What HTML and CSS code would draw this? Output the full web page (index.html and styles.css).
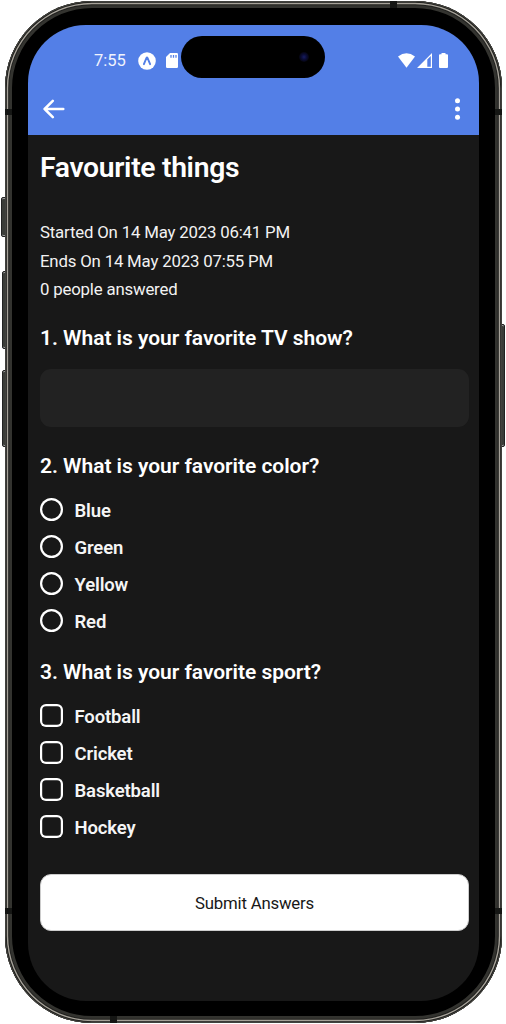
FILE: index.html
```html
<!DOCTYPE html>
<html lang="en">
<head>
<meta charset="utf-8">
<title>Favourite things</title>
<link rel="stylesheet" href="styles.css">
</head>
<body>
<div class="device">
  <i class="key key-action"></i><i class="key key-up"></i><i class="key key-down"></i><i class="key key-power"></i>
  <div class="phone">
    <i class="band band-top"></i><i class="band band-bottom"></i>
    <i class="band band-left-top"></i><i class="band band-left-bottom"></i>
    <i class="band band-right-top"></i><i class="band band-right-bottom"></i>
    <main class="screen">
      <header class="header">
        <div class="status">
          <span class="time">7:55</span>
          <svg class="expo" width="18" height="18" viewBox="0 0 18 18"><circle cx="9" cy="9" r="8.8" fill="#fff"/><path d="M5.9 12.2 8.5 5.9Q9 5 9.5 5.9L12.1 12.2" fill="none" stroke="#537fe7" stroke-width="1.9" stroke-linecap="round"/></svg>
          <svg class="sd" width="12" height="15" viewBox="0 0 12 15"><path d="M4 0H10.8Q12 0 12 1.2V13.8Q12 15 10.8 15H1.2Q0 15 0 13.8V4Z" fill="#fff"/><path d="M5 2V4.7M7.5 2V4.7M10 2V4.7" stroke="#537fe7" stroke-width="1.3"/></svg>
          <div class="indicators">
            <svg width="17" height="15" viewBox="0 0 17 15"><path d="M0 3.5Q8.5-3.2 17 3.5L8.5 14.8Z" fill="#fff"/></svg>
            <svg width="15" height="15" viewBox="0 0 15 15"><path d="M0 15 15 0V15ZM10.3 6.5V13.8H13.8V3Z" fill="#fff" fill-rule="evenodd"/></svg>
            <svg class="battery" width="9" height="15" viewBox="0 0 9 15"><path d="M2.5 0H6.5V1.3H8Q9 1.3 9 2.3V14Q9 15 8 15H1Q0 15 0 14V2.3Q0 1.3 1 1.3H2.5Z" fill="#fff"/></svg>
          </div>
        </div>
        <div class="island"><i class="camera"></i></div>
        <nav class="toolbar">
          <svg width="22" height="20" viewBox="0 0 22 20"><path d="M20.3 10H1.6M9.8 1.8 1.6 10 9.8 18.2" fill="none" stroke="#fff" stroke-width="2.5" stroke-linecap="round" stroke-linejoin="round"/></svg>
          <svg width="6" height="24" viewBox="0 0 6 24"><g fill="#fff"><circle cx="2.5" cy="3.7" r="2.5"/><circle cx="2.5" cy="12" r="2.5"/><circle cx="2.5" cy="20.2" r="2.5"/></g></svg>
        </nav>
      </header>
      <section class="content">
        <h1 class="title">Favourite things</h1>
        <div class="meta">
          <p>Started On 14 May 2023 06:41 PM</p>
          <p>Ends On 14 May 2023 07:55 PM</p>
          <p>0 people answered</p>
        </div>
        <h2 class="question">1. What is your favorite TV show?</h2>
        <div class="input"></div>
        <h2 class="question q2">2. What is your favorite color?</h2>
        <ul class="options">
          <li><i class="mark radio"></i><span>Blue</span></li>
          <li><i class="mark radio"></i><span>Green</span></li>
          <li><i class="mark radio"></i><span>Yellow</span></li>
          <li><i class="mark radio"></i><span>Red</span></li>
        </ul>
        <h2 class="question q3">3. What is your favorite sport?</h2>
        <ul class="options">
          <li><i class="mark check"></i><span>Football</span></li>
          <li><i class="mark check"></i><span>Cricket</span></li>
          <li><i class="mark check"></i><span>Basketball</span></li>
          <li><i class="mark check"></i><span>Hockey</span></li>
        </ul>
        <button class="submit">Submit Answers</button>
      </section>
    </main>
  </div>
</div>
</body>
</html>
```
FILE: styles.css
```css
* { box-sizing: border-box; }
body { margin: 0; background: #fff; font-family: Roboto, sans-serif; color: #fff; }
svg, i { display: block; flex: none; }
.device { position: relative; width: 506px; height: 1024px; padding: 1px 4px 1px 5px; overflow: hidden; }
.phone {
  position: relative; height: 1022px; padding: 24px 23px 22px; border-radius: 87px; background: #000;
  box-shadow: inset 0 0 0 1px #42423e, inset 0 0 0 1.8px #1a1a18, inset 0 0 0 3.2px #a6a299, inset 0 0 0 4.2px #20201e, inset 0 0 0 7px #33332f;
}
.key { position: absolute; background: #3b3d39; border: 1px solid #222; border-radius: 2px 0 0 2px; box-shadow: inset 0 1px #999, inset 0 -1px #999; }
.key-action { left: 1px; top: 197px; width: 5px; height: 40px; }
.key-up { left: 2px; top: 271px; width: 4px; height: 78px; }
.key-down { left: 2px; top: 370px; width: 4px; height: 77px; }
.key-power { right: 1px; top: 324px; width: 4px; height: 123px; border-radius: 0 2px 2px 0; }
.band { position: absolute; width: 7px; height: 6px; background: #151614; }
.band-top { left: 385px; top: 0; height: 7px; }
.band-bottom { left: 105px; bottom: 0; height: 7px; }
.band-left-top { left: 0; top: 108px; }
.band-left-bottom { left: 0; bottom: 109px; }
.band-right-top { right: 0; top: 108px; }
.band-right-bottom { right: 0; bottom: 109px; }
.screen { height: 976px; border-radius: 58px; background: #181818; overflow: hidden; }
.header { position: relative; height: 110px; background: #537fe7; }
.status { display: flex; align-items: center; height: 71px; padding-left: 66px; }
.time { width: 43px; font-size: 16.5px; color: #f0f3fd; }
.expo { margin-left: .5px; }
.sd { margin-left: 10.5px; }
.indicators { display: flex; gap: 2px; margin-left: auto; padding-right: 31px; }
.battery { margin-left: 5.5px; }
.island { position: absolute; left: 153px; top: 11px; width: 144px; height: 42px; border-radius: 21px; background: #000; }
.camera { width: 10px; height: 10px; margin: 16px 0 0 118px; border-radius: 50%; background: radial-gradient(circle, #171d60 0, #0b0d38 35%, #050510 70%); }
.toolbar { display: flex; justify-content: space-between; align-items: center; height: 24px; padding: 2px 18px 0 15px; }
.content { padding: 0 10px 0 12px; }
.title { margin: 0; padding-top: 15px; font-size: 28.3px; line-height: 35px; font-weight: 600; letter-spacing: -.32px; white-space: nowrap; }
.meta { padding-top: 33px; font-size: 16.8px; line-height: 28.7px; letter-spacing: -.18px; color: #f2f2f2; }
.meta p { margin: 0; }
.question { margin: 20px 0 0; font-size: 21px; line-height: 28px; font-weight: 600; letter-spacing: -.04px; white-space: nowrap; }
.input { height: 58px; margin-top: 17px; border-radius: 11px; background: #222; }
.q2 { margin-top: 25px; }
.q3 { margin-top: 19px; }
.options { margin: 11px 0 0; padding: 0; list-style: none; font-size: 18.5px; font-weight: 600; letter-spacing: -.14px; color: #f5f5f5; }
.options li { display: flex; align-items: center; gap: 11.5px; height: 37px; }
.options span { padding-top: 2px; }
.mark { width: 23px; height: 23px; box-shadow: inset 0 0 0 2.2px #fff; }
.radio { border-radius: 50%; }
.check { border-radius: 6px; }
.submit { display: block; width: 100%; height: 57px; margin-top: 29px; padding: 0; border: 1px solid #ccc; border-radius: 11px; background: #fff; color: #181818; font: 16.8px Roboto, sans-serif; letter-spacing: -.2px; }
```
